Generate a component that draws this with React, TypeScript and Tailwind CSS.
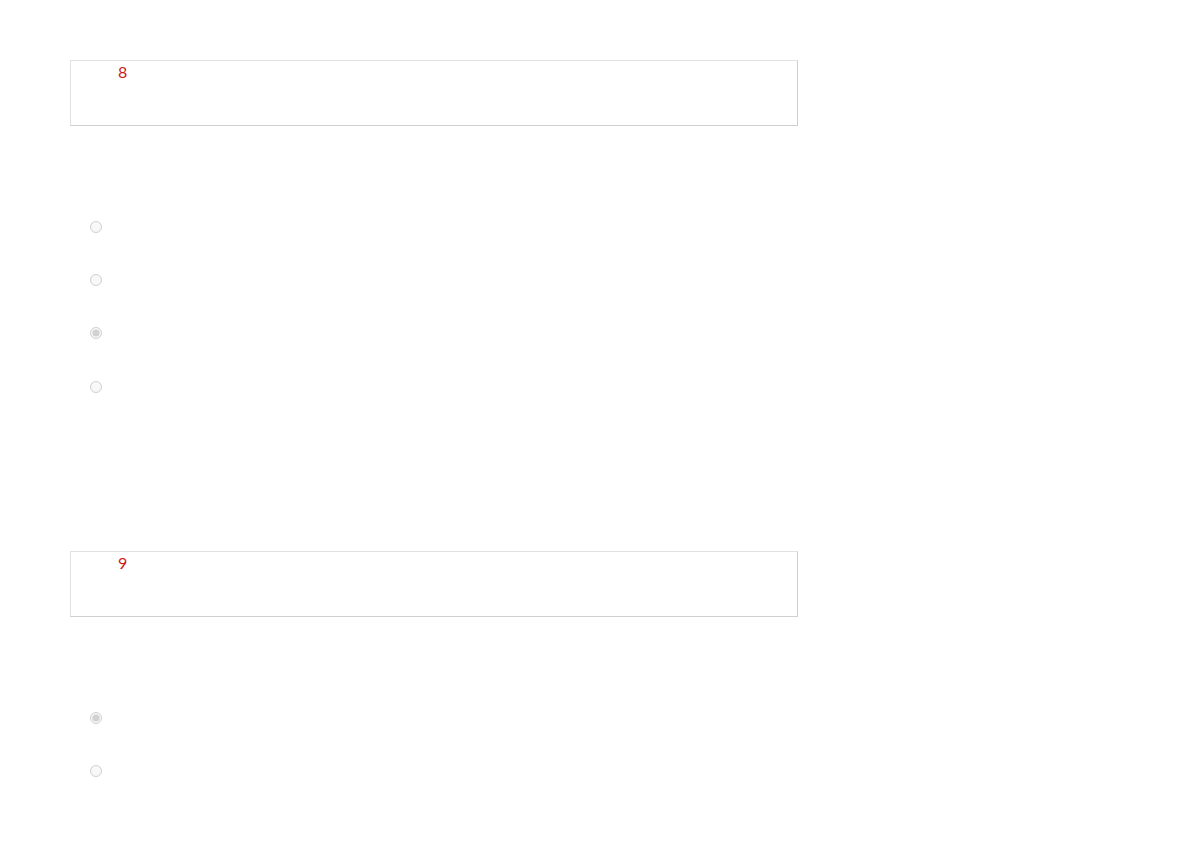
const questions = [
  { number: 8, options: 4, checked: 2 },
  { number: 9, options: 2, checked: 0 },
]

function QuestionBox({ n }: { n: number }) {
  return (
    <div className="w-[728px] h-[66px] border border-t-[#e2e2e2] border-l-[#e2e2e2] border-r-[#cfcfd4] border-b-[#cfcfd4] pl-[47px] pt-[3px] bg-white">
      <span className="block text-[16px] leading-[16px] text-[#cc1a1a] font-['Lato',sans-serif]">{n}</span>
    </div>
  )
}

export default function App() {
  return (
    <div className="min-h-[841px] bg-white pl-[70px] pt-[60px] font-['Lato',sans-serif]">
      {questions.map((q, qi) => (
        <div key={q.number} className={qi === 0 ? 'h-[491px]' : ''}>
          <QuestionBox n={q.number} />
          <div className="mt-[74px] flex flex-col">
            {Array.from({ length: q.options }).map((_, i) => (
              <label key={i} className="h-[53.4px] flex items-center pl-[20px]">
                <input
                  type="radio"
                  name={`q${q.number}`}
                  disabled
                  defaultChecked={i === q.checked}
                  className="m-0 w-[12px] h-[12px]"
                />
              </label>
            ))}
          </div>
        </div>
      ))}
    </div>
  )
}
